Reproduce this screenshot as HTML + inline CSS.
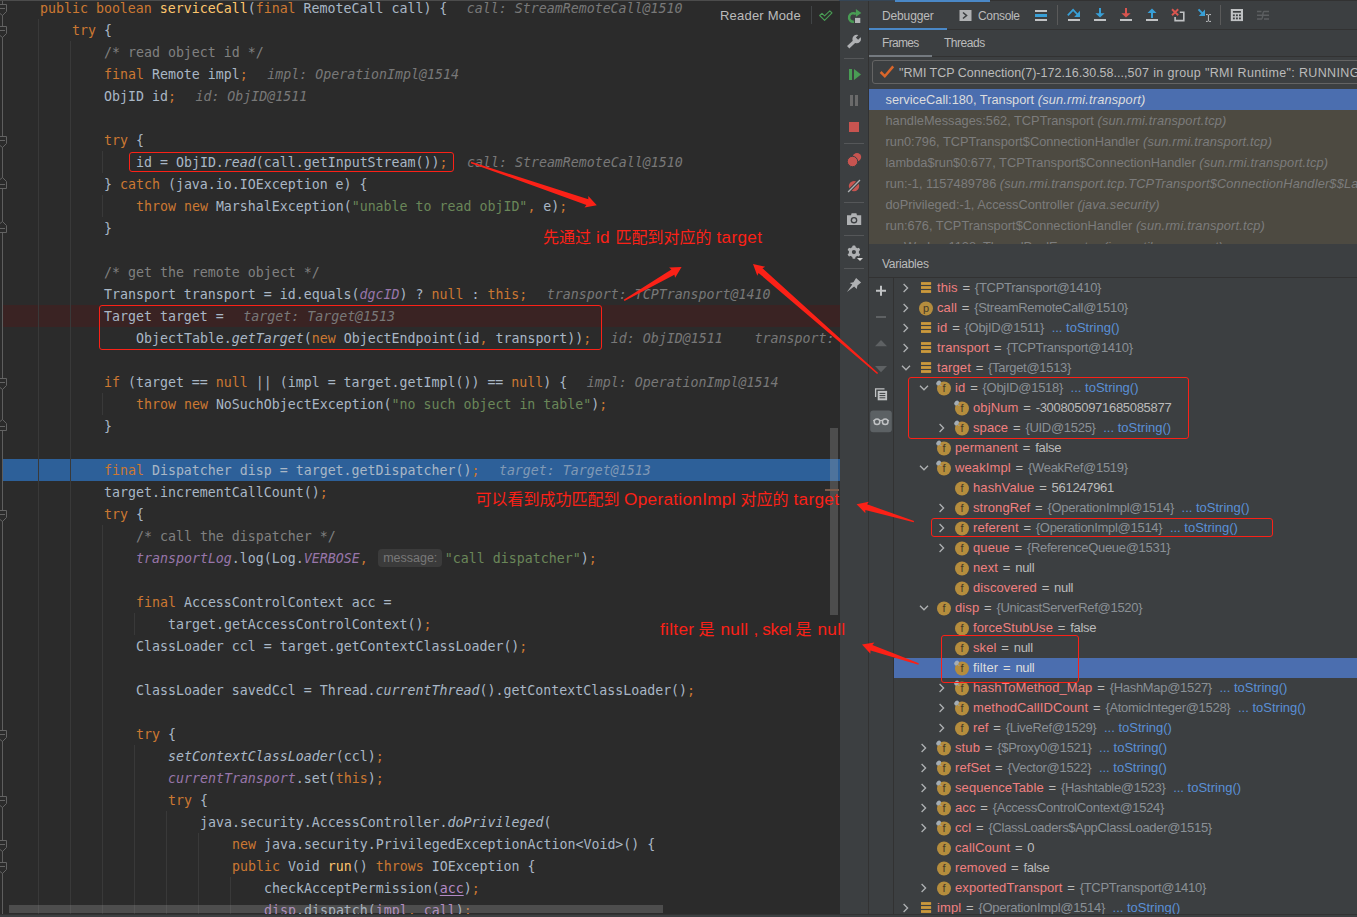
<!DOCTYPE html>
<html lang="zh-CN"><head><meta charset="utf-8"><title>serviceCall debug</title>
<style>
html,body{margin:0;padding:0;background:#2b2b2b;}
body{width:1357px;height:917px;overflow:hidden;}
#root{position:relative;width:1357px;height:917px;overflow:hidden;background:#2b2b2b;font-family:"Liberation Sans","Noto Sans CJK SC",sans-serif;}
#ed{position:absolute;left:0;top:0;width:840px;height:914px;background:#2b2b2b;overflow:hidden;}
#gut{position:absolute;left:2px;top:0;width:1px;height:914px;background:#5e5e5e;}
.g{position:absolute;width:1px;background:#393939;display:block;}
.fd{position:absolute;left:0;overflow:visible;}
#bp{position:absolute;left:3px;top:305px;width:837px;height:22px;background:#3a2323;}
#exl{position:absolute;left:3px;top:459px;width:837px;height:22px;background:#2d6099;}
.ln{position:absolute;white-space:pre;font-family:"DejaVu Sans Mono","Liberation Mono",monospace;font-size:13.288px;line-height:22px;height:22px;color:#a9b7c6;}
.k{color:#cc7832}.s{color:#6a8759}.c{color:#808080}.m{color:#ffc66d}.p{color:#cc7832}
.si{font-style:italic}.sf{font-style:italic;color:#9876aa}
.u{color:#b389c5;text-decoration:underline;text-decoration-color:#b389c5;text-underline-offset:2px}
.h{color:#787878;font-style:italic;margin-left:19.5px}
.ex .h{color:#8099b5}
.inl{display:inline-block;font-family:"Liberation Sans",sans-serif;font-size:12.5px;line-height:18px;height:18px;vertical-align:0px;position:relative;top:-1.5px;background:#3b3b3b;color:#787878;border-radius:4px;padding:0 5px 0 5.5px;margin:0 2.5px 0 10px;}
#rm{position:absolute;left:720px;top:8px;font-size:13px;letter-spacing:.2px;line-height:16px;color:#bbbbbb;}
#rmsep{position:absolute;left:811px;top:6px;width:1px;height:18px;background:#414446;}
#vs{position:absolute;left:830px;top:428px;width:8px;height:187px;background:rgba(166,166,166,.28);}
#vsm{position:absolute;left:825px;top:489px;width:14px;height:2px;background:#7a5a4a;}
#hs{position:absolute;left:9px;top:905px;width:654px;height:8px;background:rgba(166,166,166,.28);}
#tb{position:absolute;left:840px;top:0;width:28px;height:917px;background:#3c3f41;border-right:1px solid #323232;}
#pn{position:absolute;left:869px;top:0;width:488px;height:917px;background:#3c3f41;overflow:hidden;font-size:12px;color:#bbbbbb;}
#tabs{position:absolute;left:0;top:0;width:488px;height:29px;border-bottom:1px solid #323232;}
.tab{position:absolute;top:0;line-height:32px;color:#bbbbbb;font-size:12px;white-space:pre;}
#tabul{position:absolute;left:0;top:28px;width:78px;height:2px;background:#4a88c7;}
#ft{position:absolute;left:0;top:30px;width:488px;height:26px;border-bottom:1px solid #323232;}
#ft .tab{line-height:26px;}
#ftul{position:absolute;left:0;top:25px;width:63px;height:2px;background:#747a80;}
#thr{position:absolute;left:3px;top:60px;width:500px;height:22px;border:1px solid #646464;border-radius:3px;background:#3c3f41;white-space:pre;line-height:21px;color:#bbbbbb;}
#thr span{position:absolute;left:26px;top:0;font-size:12.5px;line-height:25px}#thr span b{font-weight:normal;letter-spacing:.35px}
#frs{position:absolute;left:0;top:89px;width:488px;height:155px;background:#4d4a41;overflow:hidden;}
.fr{position:absolute;left:0;width:472px;height:21px;line-height:21px;padding-left:16.5px;white-space:pre;color:#7c7c7c;font-size:12.8px;}
.fr i{color:#7c7c7c;letter-spacing:.17px}
.fr.sel{background:#4b6eaf;color:#dddddd;}
.fr.sel i{color:#dddddd}
#vh{position:absolute;left:0;top:244px;width:488px;height:33px;line-height:40px;padding-left:13px;border-bottom:1px solid #323232;color:#bbbbbb;}
#vsb{position:absolute;left:0;top:278px;width:24px;height:639px;border-right:1px solid #323232;}
#vars{position:absolute;left:25px;top:278px;width:463px;height:639px;overflow:hidden;}
.vr{position:absolute;left:0;width:463px;height:20px;}
.vr.sel{background:#4b6eaf;}
.a{position:absolute;display:block;line-height:0;}
.vt{position:absolute;top:0;line-height:20px;white-space:pre;font-size:13px;}
.vn{color:#f08080;letter-spacing:.1px}.eq{color:#bbbbbb;word-spacing:1.2px}.vo{color:#8a9096;letter-spacing:-.3px}.vp{color:#bbbbbb;letter-spacing:-.3px}.ts{color:#5a8fd6;margin-left:4px}
.sel .vp,.sel .eq{color:#dddddd}.sel .vn{color:#dddddd}
#topline{position:absolute;left:0;top:0;width:1357px;height:1px;background:linear-gradient(90deg,#4c4c4c 0,#4c4c4c 839px,#364656 839px,#364656 895px,#4a88c7 895px,#4a88c7 990px,#323232 990px);}
#topblue{position:absolute;left:895px;top:0;width:95px;height:2px;background:#4a88c7;}
#botline{position:absolute;left:0;top:914px;width:1357px;height:3px;background:#3c3f41;border-top:1px solid #323232;box-sizing:border-box;}
.rb{position:absolute;border:1px solid #fb2117;border-radius:3px;}
#ann{position:absolute;left:0;top:0;pointer-events:none;}
.rt{position:absolute;color:#fb2117;line-height:24px;white-space:pre;}
.rc{font-family:"Noto Sans CJK SC","WenQuanYi Zen Hei",sans-serif;font-size:16px;}
.rl{font-family:"Liberation Sans",sans-serif;font-size:17.2px;letter-spacing:.3px}
.tbi{position:absolute;display:block;}
.tbs{position:absolute;left:4px;width:20px;height:1px;background:#555759;}

</style></head><body>
<div id="root">
<div id="ed">
<div id="bp"></div><div id="exl"></div>
<i class="g" style="left:38px;top:19px;height:902px"></i>
<i class="g" style="left:70px;top:41px;height:880px"></i>
<i class="g" style="left:102px;top:151px;height:22px"></i>
<i class="g" style="left:102px;top:195px;height:22px"></i>
<i class="g" style="left:102px;top:393px;height:22px"></i>
<i class="g" style="left:102px;top:525px;height:396px"></i>
<i class="g" style="left:134px;top:613px;height:22px"></i>
<i class="g" style="left:134px;top:745px;height:176px"></i>
<i class="g" style="left:166px;top:811px;height:110px"></i>
<i class="g" style="left:198px;top:833px;height:88px"></i>
<i class="g" style="left:230px;top:877px;height:44px"></i>
<div id="gut"></div>
<svg class="fd" style="top:4px" width="8" height="12" viewBox="0 0 8 12"><path d="M-2.5 0.5H6.5V7.5L2.5 11.5L-2.5 7.5Z" fill="#2b2b2b" stroke="#636363"/><path d="M0 4.5H5" stroke="#636363"/></svg>
<svg class="fd" style="top:26px" width="8" height="12" viewBox="0 0 8 12"><path d="M-2.5 0.5H6.5V7.5L2.5 11.5L-2.5 7.5Z" fill="#2b2b2b" stroke="#636363"/><path d="M0 4.5H5" stroke="#636363"/></svg>
<svg class="fd" style="top:136px" width="8" height="12" viewBox="0 0 8 12"><path d="M-2.5 0.5H6.5V7.5L2.5 11.5L-2.5 7.5Z" fill="#2b2b2b" stroke="#636363"/><path d="M0 4.5H5" stroke="#636363"/></svg>
<svg class="fd" style="top:177px" width="8" height="12" viewBox="0 0 8 12"><path d="M-2.5 11.5H6.5V4.5L2.5 0.5L-2.5 4.5Z" fill="#2b2b2b" stroke="#636363"/><path d="M0 7.5H5" stroke="#636363"/></svg>
<svg class="fd" style="top:221px" width="8" height="12" viewBox="0 0 8 12"><path d="M-2.5 11.5H6.5V4.5L2.5 0.5L-2.5 4.5Z" fill="#2b2b2b" stroke="#636363"/><path d="M0 7.5H5" stroke="#636363"/></svg>
<svg class="fd" style="top:378px" width="8" height="12" viewBox="0 0 8 12"><path d="M-2.5 0.5H6.5V7.5L2.5 11.5L-2.5 7.5Z" fill="#2b2b2b" stroke="#636363"/><path d="M0 4.5H5" stroke="#636363"/></svg>
<svg class="fd" style="top:419px" width="8" height="12" viewBox="0 0 8 12"><path d="M-2.5 11.5H6.5V4.5L2.5 0.5L-2.5 4.5Z" fill="#2b2b2b" stroke="#636363"/><path d="M0 7.5H5" stroke="#636363"/></svg>
<svg class="fd" style="top:510px" width="8" height="12" viewBox="0 0 8 12"><path d="M-2.5 0.5H6.5V7.5L2.5 11.5L-2.5 7.5Z" fill="#2b2b2b" stroke="#636363"/><path d="M0 4.5H5" stroke="#636363"/></svg>
<svg class="fd" style="top:730px" width="8" height="12" viewBox="0 0 8 12"><path d="M-2.5 0.5H6.5V7.5L2.5 11.5L-2.5 7.5Z" fill="#2b2b2b" stroke="#636363"/><path d="M0 4.5H5" stroke="#636363"/></svg>
<svg class="fd" style="top:796px" width="8" height="12" viewBox="0 0 8 12"><path d="M-2.5 0.5H6.5V7.5L2.5 11.5L-2.5 7.5Z" fill="#2b2b2b" stroke="#636363"/><path d="M0 4.5H5" stroke="#636363"/></svg>
<svg class="fd" style="top:840px" width="8" height="12" viewBox="0 0 8 12"><path d="M-2.5 0.5H6.5V7.5L2.5 11.5L-2.5 7.5Z" fill="#2b2b2b" stroke="#636363"/><path d="M0 4.5H5" stroke="#636363"/></svg>
<svg class="fd" style="top:862px" width="8" height="12" viewBox="0 0 8 12"><path d="M-2.5 0.5H6.5V7.5L2.5 11.5L-2.5 7.5Z" fill="#2b2b2b" stroke="#636363"/><path d="M0 4.5H5" stroke="#636363"/></svg>
<div class="ln" style="top:-2px;left:40px"><span class="k">public boolean </span><span class="m">serviceCall</span>(<span class="k">final </span>RemoteCall call) {<span class="h">call: StreamRemoteCall@1510</span></div>
<div class="ln" style="top:20px;left:72px"><span class="k">try </span>{</div>
<div class="ln" style="top:42px;left:104px"><span class="c">/* read object id */</span></div>
<div class="ln" style="top:64px;left:104px"><span class="k">final </span>Remote impl<span class="p">;</span><span class="h">impl: OperationImpl@1514</span></div>
<div class="ln" style="top:86px;left:104px">ObjID id<span class="p">;</span><span class="h">id: ObjID@1511</span></div>
<div class="ln" style="top:130px;left:104px"><span class="k">try </span>{</div>
<div class="ln" style="top:152px;left:136px">id = ObjID.<span class="si">read</span>(call.getInputStream())<span class="p">;</span><span class="h">call: StreamRemoteCall@1510</span></div>
<div class="ln" style="top:174px;left:104px">} <span class="k">catch </span>(java.io.IOException e) {</div>
<div class="ln" style="top:196px;left:136px"><span class="k">throw new </span>MarshalException(<span class="s">"unable to read objID"</span><span class="p">,</span> e)<span class="p">;</span></div>
<div class="ln" style="top:218px;left:104px">}</div>
<div class="ln" style="top:262px;left:104px"><span class="c">/* get the remote object */</span></div>
<div class="ln" style="top:284px;left:104px">Transport transport = id.equals(<span class="sf">dgcID</span>) ? <span class="k">null </span>: <span class="k">this</span><span class="p">;</span><span class="h">transport: TCPTransport@1410</span></div>
<div class="ln" style="top:306px;left:104px">Target target =<span class="h">target: Target@1513</span></div>
<div class="ln" style="top:328px;left:136px">ObjectTable.<span class="si">getTarget</span>(<span class="k">new </span>ObjectEndpoint(id<span class="p">,</span> transport))<span class="p">;</span><span class="h">id: ObjID@1511    transport:</span></div>
<div class="ln" style="top:372px;left:104px"><span class="k">if </span>(target == <span class="k">null </span>|| (impl = target.getImpl()) == <span class="k">null</span>) {<span class="h">impl: OperationImpl@1514</span></div>
<div class="ln" style="top:394px;left:136px"><span class="k">throw new </span>NoSuchObjectException(<span class="s">"no such object in table"</span>)<span class="p">;</span></div>
<div class="ln" style="top:416px;left:104px">}</div>
<div class="ln ex" style="top:460px;left:104px"><span class="k">final </span>Dispatcher disp = target.getDispatcher()<span class="p">;</span><span class="h">target: Target@1513</span></div>
<div class="ln" style="top:482px;left:104px">target.incrementCallCount()<span class="p">;</span></div>
<div class="ln" style="top:504px;left:104px"><span class="k">try </span>{</div>
<div class="ln" style="top:526px;left:136px"><span class="c">/* call the dispatcher */</span></div>
<div class="ln" style="top:548px;left:136px"><span class="sf">transportLog</span>.log(Log.<span class="sf">VERBOSE</span><span class="p">,</span><span class="inl">message:</span><span class="s">"call dispatcher"</span>)<span class="p">;</span></div>
<div class="ln" style="top:592px;left:136px"><span class="k">final </span>AccessControlContext acc =</div>
<div class="ln" style="top:614px;left:168px">target.getAccessControlContext()<span class="p">;</span></div>
<div class="ln" style="top:636px;left:136px">ClassLoader ccl = target.getContextClassLoader()<span class="p">;</span></div>
<div class="ln" style="top:680px;left:136px">ClassLoader savedCcl = Thread.<span class="si">currentThread</span>().getContextClassLoader()<span class="p">;</span></div>
<div class="ln" style="top:724px;left:136px"><span class="k">try </span>{</div>
<div class="ln" style="top:746px;left:168px"><span class="si">setContextClassLoader</span>(ccl)<span class="p">;</span></div>
<div class="ln" style="top:768px;left:168px"><span class="sf">currentTransport</span>.set(<span class="k">this</span>)<span class="p">;</span></div>
<div class="ln" style="top:790px;left:168px"><span class="k">try </span>{</div>
<div class="ln" style="top:812px;left:200px">java.security.AccessController.<span class="si">doPrivileged</span>(</div>
<div class="ln" style="top:834px;left:232px"><span class="k">new </span>java.security.PrivilegedExceptionAction&lt;Void&gt;() {</div>
<div class="ln" style="top:856px;left:232px"><span class="k">public </span>Void <span class="m">run</span>() <span class="k">throws </span>IOException {</div>
<div class="ln" style="top:878px;left:264px">checkAcceptPermission(<span class="u">acc</span>)<span class="p">;</span></div>
<div class="ln" style="top:900px;left:264px"><span class="u">disp</span>.dispatch(<span class="u">impl</span><span class="p">,</span> <span class="u">call</span>)<span class="p">;</span></div>
<div id="rm">Reader Mode</div><div id="rmsep"></div><svg class="tbi" style="left:816px;top:6px" width="20" height="20" viewBox="816 6 20 20"><path d="M819.7 15.5L822 13.3L824.6 15.9L829.8 10.9L832 12.9L824.6 20.4Z" fill="none" stroke="#499c54" stroke-width="1.1" stroke-linejoin="round"/></svg>
<div id="vs"></div><div id="vsm"></div><div id="hs"></div>
</div>
<div id="tb"><svg class="tbi" style="left:0;top:0" width="28" height="300" viewBox="0 0 28 300"><rect x="4" y="58" width="20" height="1" fill="#555759"/><rect x="4" y="143" width="20" height="1" fill="#555759"/><rect x="4" y="202" width="20" height="1" fill="#555759"/><rect x="4" y="235" width="20" height="1" fill="#555759"/><rect x="4" y="268" width="20" height="1" fill="#555759"/><path d="M15.9 14A4.3 4.3 0 1 0 13.9 21.75" fill="none" stroke="#499c54" stroke-width="2.5"/><path d="M15.9 9V16.8L21.3 12.9Z" fill="#499c54"/><rect x="15" y="17.9" width="5.3" height="5.1" fill="#b4b6b8"/><path d="M8.2 47.2L15.3 40.6" stroke="#afb1b3" stroke-width="3.3"/><circle cx="16.7" cy="39" r="4.3" fill="#afb1b3"/><path d="M17 38.7L22 33.7" stroke="#3c3f41" stroke-width="3.2"/><rect x="9" y="69" width="3" height="11" fill="#499c54"/><path d="M14 69V80L21 74.5Z" fill="#499c54"/><rect x="10" y="95" width="3" height="11" fill="#6a6a6a"/><rect x="15" y="95" width="3" height="11" fill="#6a6a6a"/><rect x="9" y="122" width="10" height="10" fill="#c75450"/><circle cx="17" cy="157.1" r="4.2" fill="#c75450"/><circle cx="12.5" cy="161.5" r="5.2" fill="#c75450" stroke="#3c3f41" stroke-width="1"/><circle cx="14" cy="186.1" r="5.2" fill="#c75450"/><path d="M8.1 192L20 180" stroke="#3c3f41" stroke-width="3.3"/><path d="M8.1 192L20 180" stroke="#afb1b3" stroke-width="1.3"/><path d="M7 215.3H11L11.6 213.2H16.4L17 215.3H21.2V225H7Z" fill="#afb1b3"/><circle cx="14" cy="220.2" r="3.3" fill="#3c3f41"/><circle cx="14" cy="220.2" r="1.9" fill="#afb1b3"/><rect x="12.4" y="245.5" width="3" height="4" rx="0.8" transform="rotate(0 13.9 252.1)" fill="#afb1b3"/><rect x="12.4" y="245.5" width="3" height="4" rx="0.8" transform="rotate(60 13.9 252.1)" fill="#afb1b3"/><rect x="12.4" y="245.5" width="3" height="4" rx="0.8" transform="rotate(120 13.9 252.1)" fill="#afb1b3"/><rect x="12.4" y="245.5" width="3" height="4" rx="0.8" transform="rotate(180 13.9 252.1)" fill="#afb1b3"/><rect x="12.4" y="245.5" width="3" height="4" rx="0.8" transform="rotate(240 13.9 252.1)" fill="#afb1b3"/><rect x="12.4" y="245.5" width="3" height="4" rx="0.8" transform="rotate(300 13.9 252.1)" fill="#afb1b3"/><circle cx="13.9" cy="252.1" r="3.6" fill="none" stroke="#afb1b3" stroke-width="3"/><path d="M16.9 258H23L20 261Z" fill="#d2d2d2"/><path d="M16.1 278L21.1 282.5L17.4 285.4L16.8 289.1L14.1 286.4L6.9 292L12.3 284.6L9.7 282.9L13.4 282.2Z" fill="#afb1b3"/></svg></div>
<div id="pn">
<div id="tabs"><span class="tab" style="left:13px;letter-spacing:-.14px">Debugger</span><svg class="tbi" style="left:90px;top:9px" width="13" height="13" viewBox="0 0 13 13"><rect x="0.5" y="1" width="12" height="11" fill="#afb1b3"/><path d="M4 3.5L7.5 6.5L4 9.5" fill="none" stroke="#3c3f41" stroke-width="1.6"/></svg><span class="tab" style="left:109px;letter-spacing:-.33px">Console</span><svg class="tbi" style="left:0;top:0" width="488" height="30" viewBox="869 0 488 30"><rect x="1035" y="10" width="12" height="2" fill="#c0c2c4"/><rect x="1035" y="14" width="12" height="3" fill="#389fd6"/><rect x="1035" y="19" width="12" height="2" fill="#c0c2c4"/><rect x="1057" y="5" width="1" height="20" fill="#5a5a5a"/><path d="M1067.8 15.4L1073.1 9.8L1078 15" fill="none" stroke="#389fd6" stroke-width="1.7"/><path d="M1080 10.8V16.9H1074.2Z" fill="#389fd6"/><rect x="1068" y="19" width="12" height="2" fill="#c0c2c4"/><rect x="1099" y="8" width="2" height="6" fill="#389fd6"/><path d="M1095.4 13.2H1104.6L1100 17.6Z" fill="#389fd6"/><rect x="1094" y="19" width="12" height="2" fill="#c0c2c4"/><rect x="1125" y="8" width="2" height="6" fill="#d9554f"/><path d="M1121.4 13.2H1130.6L1126 17.6Z" fill="#d9554f"/><rect x="1120" y="19" width="12" height="2" fill="#c0c2c4"/><rect x="1151" y="12" width="2" height="6" fill="#389fd6"/><path d="M1147.5 12.9H1156.5L1152 8.5Z" fill="#389fd6"/><rect x="1146" y="19" width="12" height="2" fill="#c0c2c4"/><path d="M1172 9.2L1178.2 15.2M1178.2 9.2L1172 15.2" stroke="#d9554f" stroke-width="1.9"/><path d="M1179.8 12.3H1183.8V20.6H1175.1V17" fill="none" stroke="#c0c2c4" stroke-width="1.6"/><path d="M1198.5 9.4L1203 14" stroke="#389fd6" stroke-width="1.9"/><path d="M1205 9.6V15.9H1198.8Z" fill="#389fd6"/><path d="M1206 14.6H1207.6L1208.4 15.2L1209.2 14.6H1211M1208.4 15V20.8M1206 21.4H1207.6L1208.4 20.8L1209.2 21.4H1211" fill="none" stroke="#c0c2c4" stroke-width="1"/><rect x="1220" y="5" width="1" height="20" fill="#5a5a5a"/><rect x="1230.8" y="9" width="12.2" height="12.1" fill="#c0c2c4"/><rect x="1232.9" y="11" width="8" height="1.7" fill="#3c3f41"/><rect x="1232.9" y="14.4" width="1.9" height="1.8" fill="#3c3f41"/><rect x="1235.95" y="14.4" width="1.9" height="1.8" fill="#3c3f41"/><rect x="1239" y="14.4" width="1.9" height="1.8" fill="#3c3f41"/><rect x="1232.9" y="17.5" width="1.9" height="1.8" fill="#3c3f41"/><rect x="1235.95" y="17.5" width="1.9" height="1.8" fill="#3c3f41"/><rect x="1239" y="17.5" width="1.9" height="1.8" fill="#3c3f41"/><path d="M1257 11.5H1261.5M1264 11.5H1269M1257 15.2H1269M1257 19H1261.5M1264 19H1269M1261.5 19C1263 19 1262.5 11.5 1264 11.5" fill="none" stroke="#5c5f61" stroke-width="1.5"/></svg><div id="tabul"></div></div>
<div id="ft"><span class="tab" style="left:13px;letter-spacing:-.7px">Frames</span><span class="tab" style="left:75px;letter-spacing:-.47px">Threads</span><div id="ftul"></div></div>
<div id="thr"><svg class="tbi" style="left:6px;top:3px" width="16" height="16" viewBox="0 0 16 16"><path d="M1.6 8L5.8 12.2L14.2 2.4" fill="none" stroke="#d9662b" stroke-width="2.5"/></svg><span>"RMI TCP Connection(7)-172.16.30.58...,<b>507 in group "RMI Runtime": RUNNING</b></span></div>
<div id="frs"><div class="fr sel" style="top:0px">serviceCall:180, Transport <i>(sun.rmi.transport)</i></div>
<div class="fr" style="top:21px">handleMessages:562, TCPTransport <i>(sun.rmi.transport.tcp)</i></div>
<div class="fr" style="top:42px">run0:796, TCPTransport$ConnectionHandler <i>(sun.rmi.transport.tcp)</i></div>
<div class="fr" style="top:63px">lambda$run$0:677, TCPTransport$ConnectionHandler <i>(sun.rmi.transport.tcp)</i></div>
<div class="fr" style="top:84px">run:-1, 1157489786 <i>(sun.rmi.transport.tcp.TCPTransport$ConnectionHandler$$Lambda$5)</i></div>
<div class="fr" style="top:105px">doPrivileged:-1, AccessController <i>(java.security)</i></div>
<div class="fr" style="top:126px">run:676, TCPTransport$ConnectionHandler <i>(sun.rmi.transport.tcp)</i></div>
<div class="fr" style="top:147px">runWorker:1128, ThreadPoolExecutor <i>(java.util.concurrent)</i></div></div>
<div id="vh"><span style="letter-spacing:-.28px">Variables</span></div>
<div id="vsb"><svg class="tbi" style="left:0;top:0" width="24" height="160" viewBox="869 278 24 160"><path d="M881 285.8V295.8M876 290.8H886" stroke="#c0c2c4" stroke-width="2"/><path d="M876 317H886" stroke="#5e6163" stroke-width="2"/><path d="M875 346.3L881 340L887 346.3Z" fill="#5e6163"/><path d="M875 366L881 372.3L887 366Z" fill="#5e6163"/><path d="M875.6 397V388.9H884.5" fill="none" stroke="#c0c2c4" stroke-width="1.3"/><rect x="877.7" y="390.9" width="9.4" height="9.4" fill="#c0c2c4"/><path d="M879.5 393.4H885.3M879.5 395.6H885.3M879.5 397.8H885.3" stroke="#3c3f41" stroke-width="1"/><rect x="870.2" y="410.5" width="21.6" height="21.7" rx="3" fill="#5c6164"/><circle cx="877" cy="421.8" r="2.8" fill="none" stroke="#c0c2c4" stroke-width="1.5"/><circle cx="885.2" cy="421.8" r="2.8" fill="none" stroke="#c0c2c4" stroke-width="1.5"/><path d="M879.6 420.8Q881.1 419.8 882.6 420.8M874.3 420.8L873.2 420.2M887.9 420.8L889 420.2" fill="none" stroke="#c0c2c4" stroke-width="1.2"/></svg></div>
<div id="vars"><div class="vr" style="top:0px"><span class="a" style="left:7px;top:3.5px"><svg class="ar" width="10" height="12" viewBox="0 0 10 12"><path d="M2.6 2L6.6 6L2.6 10" fill="none" stroke="#afb1b3" stroke-width="1.3"/></svg></span><span class="a" style="left:26px;top:4px"><svg class="ic" width="12" height="13" viewBox="0 0 12 13"><path d="M1 1.5H11.1M1 5.5H11.1M1 9.5H11.1" stroke="#bf8f38" stroke-width="3.1"/><path d="M1 1.5H11.1M1 5.5H11.1M1 9.5H11.1" stroke="#c89a42" stroke-width="0.9"/></svg></span><span class="vt" style="left:43px"><span class="vn">this</span><span class="eq"> = </span><span class="vo">{TCPTransport@1410}</span></span></div>
<div class="vr" style="top:20px"><span class="a" style="left:7px;top:3.5px"><svg class="ar" width="10" height="12" viewBox="0 0 10 12"><path d="M2.6 2L6.6 6L2.6 10" fill="none" stroke="#afb1b3" stroke-width="1.3"/></svg></span><span class="a" style="left:24px;top:2px"><svg class="ic c" width="16" height="16" viewBox="0 0 16 16" overflow="visible"><circle cx="8" cy="8.5" r="7" fill="#b58d3d"/><text x="8" y="12.3" text-anchor="middle" font-family="Liberation Sans, sans-serif" font-size="11" fill="#44392a">p</text></svg></span><span class="vt" style="left:43px"><span class="vn">call</span><span class="eq"> = </span><span class="vo">{StreamRemoteCall@1510}</span></span></div>
<div class="vr" style="top:40px"><span class="a" style="left:7px;top:3.5px"><svg class="ar" width="10" height="12" viewBox="0 0 10 12"><path d="M2.6 2L6.6 6L2.6 10" fill="none" stroke="#afb1b3" stroke-width="1.3"/></svg></span><span class="a" style="left:26px;top:4px"><svg class="ic" width="12" height="13" viewBox="0 0 12 13"><path d="M1 1.5H11.1M1 5.5H11.1M1 9.5H11.1" stroke="#bf8f38" stroke-width="3.1"/><path d="M1 1.5H11.1M1 5.5H11.1M1 9.5H11.1" stroke="#c89a42" stroke-width="0.9"/></svg></span><span class="vt" style="left:43px"><span class="vn">id</span><span class="eq"> = </span><span class="vo">{ObjID@1511}</span><span class="ts"> ... toString()</span></span></div>
<div class="vr" style="top:60px"><span class="a" style="left:7px;top:3.5px"><svg class="ar" width="10" height="12" viewBox="0 0 10 12"><path d="M2.6 2L6.6 6L2.6 10" fill="none" stroke="#afb1b3" stroke-width="1.3"/></svg></span><span class="a" style="left:26px;top:4px"><svg class="ic" width="12" height="13" viewBox="0 0 12 13"><path d="M1 1.5H11.1M1 5.5H11.1M1 9.5H11.1" stroke="#bf8f38" stroke-width="3.1"/><path d="M1 1.5H11.1M1 5.5H11.1M1 9.5H11.1" stroke="#c89a42" stroke-width="0.9"/></svg></span><span class="vt" style="left:43px"><span class="vn">transport</span><span class="eq"> = </span><span class="vo">{TCPTransport@1410}</span></span></div>
<div class="vr" style="top:80px"><span class="a" style="left:6px;top:4.5px"><svg class="ar" width="12" height="10" viewBox="0 0 12 10"><path d="M2 2.8L6 6.8L10 2.8" fill="none" stroke="#afb1b3" stroke-width="1.3"/></svg></span><span class="a" style="left:26px;top:4px"><svg class="ic" width="12" height="13" viewBox="0 0 12 13"><path d="M1 1.5H11.1M1 5.5H11.1M1 9.5H11.1" stroke="#bf8f38" stroke-width="3.1"/><path d="M1 1.5H11.1M1 5.5H11.1M1 9.5H11.1" stroke="#c89a42" stroke-width="0.9"/></svg></span><span class="vt" style="left:43px"><span class="vn">target</span><span class="eq"> = </span><span class="vo">{Target@1513}</span></span></div>
<div class="vr" style="top:100px"><span class="a" style="left:24px;top:4.5px"><svg class="ar" width="12" height="10" viewBox="0 0 12 10"><path d="M2 2.8L6 6.8L10 2.8" fill="none" stroke="#afb1b3" stroke-width="1.3"/></svg></span><span class="a" style="left:42px;top:2px"><svg class="ic c" width="16" height="16" viewBox="0 0 16 16" overflow="visible"><circle cx="8" cy="8.5" r="7" fill="#b58d3d"/><text x="8" y="12.3" text-anchor="middle" font-family="Liberation Sans, sans-serif" font-size="11" fill="#44392a">f</text><ellipse cx="2.6" cy="3" rx="2.7" ry="2" transform="rotate(-45 2.6 3)" fill="#a4adb5"/><path d="M3.6 4.2L5.4 6" stroke="#9aa7b0" stroke-width="1"/></svg></span><span class="vt" style="left:61px"><span class="vn">id</span><span class="eq"> = </span><span class="vo">{ObjID@1518}</span><span class="ts"> ... toString()</span></span></div>
<div class="vr" style="top:120px"><span class="a" style="left:60px;top:2px"><svg class="ic c" width="16" height="16" viewBox="0 0 16 16" overflow="visible"><circle cx="8" cy="8.5" r="7" fill="#b58d3d"/><text x="8" y="12.3" text-anchor="middle" font-family="Liberation Sans, sans-serif" font-size="11" fill="#44392a">f</text><ellipse cx="2.6" cy="3" rx="2.7" ry="2" transform="rotate(-45 2.6 3)" fill="#a4adb5"/><path d="M3.6 4.2L5.4 6" stroke="#9aa7b0" stroke-width="1"/></svg></span><span class="vt" style="left:79px"><span class="vn">objNum</span><span class="eq"> = </span><span class="vp">-3008050971685085877</span></span></div>
<div class="vr" style="top:140px"><span class="a" style="left:43px;top:3.5px"><svg class="ar" width="10" height="12" viewBox="0 0 10 12"><path d="M2.6 2L6.6 6L2.6 10" fill="none" stroke="#afb1b3" stroke-width="1.3"/></svg></span><span class="a" style="left:60px;top:2px"><svg class="ic c" width="16" height="16" viewBox="0 0 16 16" overflow="visible"><circle cx="8" cy="8.5" r="7" fill="#b58d3d"/><text x="8" y="12.3" text-anchor="middle" font-family="Liberation Sans, sans-serif" font-size="11" fill="#44392a">f</text><ellipse cx="2.6" cy="3" rx="2.7" ry="2" transform="rotate(-45 2.6 3)" fill="#a4adb5"/><path d="M3.6 4.2L5.4 6" stroke="#9aa7b0" stroke-width="1"/></svg></span><span class="vt" style="left:79px"><span class="vn">space</span><span class="eq"> = </span><span class="vo">{UID@1525}</span><span class="ts"> ... toString()</span></span></div>
<div class="vr" style="top:160px"><span class="a" style="left:42px;top:2px"><svg class="ic c" width="16" height="16" viewBox="0 0 16 16" overflow="visible"><circle cx="8" cy="8.5" r="7" fill="#b58d3d"/><text x="8" y="12.3" text-anchor="middle" font-family="Liberation Sans, sans-serif" font-size="11" fill="#44392a">f</text><ellipse cx="2.6" cy="3" rx="2.7" ry="2" transform="rotate(-45 2.6 3)" fill="#a4adb5"/><path d="M3.6 4.2L5.4 6" stroke="#9aa7b0" stroke-width="1"/></svg></span><span class="vt" style="left:61px"><span class="vn">permanent</span><span class="eq"> = </span><span class="vp">false</span></span></div>
<div class="vr" style="top:180px"><span class="a" style="left:24px;top:4.5px"><svg class="ar" width="12" height="10" viewBox="0 0 12 10"><path d="M2 2.8L6 6.8L10 2.8" fill="none" stroke="#afb1b3" stroke-width="1.3"/></svg></span><span class="a" style="left:42px;top:2px"><svg class="ic c" width="16" height="16" viewBox="0 0 16 16" overflow="visible"><circle cx="8" cy="8.5" r="7" fill="#b58d3d"/><text x="8" y="12.3" text-anchor="middle" font-family="Liberation Sans, sans-serif" font-size="11" fill="#44392a">f</text><ellipse cx="2.6" cy="3" rx="2.7" ry="2" transform="rotate(-45 2.6 3)" fill="#a4adb5"/><path d="M3.6 4.2L5.4 6" stroke="#9aa7b0" stroke-width="1"/></svg></span><span class="vt" style="left:61px"><span class="vn">weakImpl</span><span class="eq"> = </span><span class="vo">{WeakRef@1519}</span></span></div>
<div class="vr" style="top:200px"><span class="a" style="left:60px;top:2px"><svg class="ic c" width="16" height="16" viewBox="0 0 16 16" overflow="visible"><circle cx="8" cy="8.5" r="7" fill="#b58d3d"/><text x="8" y="12.3" text-anchor="middle" font-family="Liberation Sans, sans-serif" font-size="11" fill="#44392a">f</text></svg></span><span class="vt" style="left:79px"><span class="vn">hashValue</span><span class="eq"> = </span><span class="vp">561247961</span></span></div>
<div class="vr" style="top:220px"><span class="a" style="left:43px;top:3.5px"><svg class="ar" width="10" height="12" viewBox="0 0 10 12"><path d="M2.6 2L6.6 6L2.6 10" fill="none" stroke="#afb1b3" stroke-width="1.3"/></svg></span><span class="a" style="left:60px;top:2px"><svg class="ic c" width="16" height="16" viewBox="0 0 16 16" overflow="visible"><circle cx="8" cy="8.5" r="7" fill="#b58d3d"/><text x="8" y="12.3" text-anchor="middle" font-family="Liberation Sans, sans-serif" font-size="11" fill="#44392a">f</text></svg></span><span class="vt" style="left:79px"><span class="vn">strongRef</span><span class="eq"> = </span><span class="vo">{OperationImpl@1514}</span><span class="ts"> ... toString()</span></span></div>
<div class="vr" style="top:240px"><span class="a" style="left:43px;top:3.5px"><svg class="ar" width="10" height="12" viewBox="0 0 10 12"><path d="M2.6 2L6.6 6L2.6 10" fill="none" stroke="#afb1b3" stroke-width="1.3"/></svg></span><span class="a" style="left:60px;top:2px"><svg class="ic c" width="16" height="16" viewBox="0 0 16 16" overflow="visible"><circle cx="8" cy="8.5" r="7" fill="#b58d3d"/><text x="8" y="12.3" text-anchor="middle" font-family="Liberation Sans, sans-serif" font-size="11" fill="#44392a">f</text></svg></span><span class="vt" style="left:79px"><span class="vn">referent</span><span class="eq"> = </span><span class="vo">{OperationImpl@1514}</span><span class="ts"> ... toString()</span></span></div>
<div class="vr" style="top:260px"><span class="a" style="left:43px;top:3.5px"><svg class="ar" width="10" height="12" viewBox="0 0 10 12"><path d="M2.6 2L6.6 6L2.6 10" fill="none" stroke="#afb1b3" stroke-width="1.3"/></svg></span><span class="a" style="left:60px;top:2px"><svg class="ic c" width="16" height="16" viewBox="0 0 16 16" overflow="visible"><circle cx="8" cy="8.5" r="7" fill="#b58d3d"/><text x="8" y="12.3" text-anchor="middle" font-family="Liberation Sans, sans-serif" font-size="11" fill="#44392a">f</text></svg></span><span class="vt" style="left:79px"><span class="vn">queue</span><span class="eq"> = </span><span class="vo">{ReferenceQueue@1531}</span></span></div>
<div class="vr" style="top:280px"><span class="a" style="left:60px;top:2px"><svg class="ic c" width="16" height="16" viewBox="0 0 16 16" overflow="visible"><circle cx="8" cy="8.5" r="7" fill="#b58d3d"/><text x="8" y="12.3" text-anchor="middle" font-family="Liberation Sans, sans-serif" font-size="11" fill="#44392a">f</text></svg></span><span class="vt" style="left:79px"><span class="vn">next</span><span class="eq"> = </span><span class="vp">null</span></span></div>
<div class="vr" style="top:300px"><span class="a" style="left:60px;top:2px"><svg class="ic c" width="16" height="16" viewBox="0 0 16 16" overflow="visible"><circle cx="8" cy="8.5" r="7" fill="#b58d3d"/><text x="8" y="12.3" text-anchor="middle" font-family="Liberation Sans, sans-serif" font-size="11" fill="#44392a">f</text></svg></span><span class="vt" style="left:79px"><span class="vn">discovered</span><span class="eq"> = </span><span class="vp">null</span></span></div>
<div class="vr" style="top:320px"><span class="a" style="left:24px;top:4.5px"><svg class="ar" width="12" height="10" viewBox="0 0 12 10"><path d="M2 2.8L6 6.8L10 2.8" fill="none" stroke="#afb1b3" stroke-width="1.3"/></svg></span><span class="a" style="left:42px;top:2px"><svg class="ic c" width="16" height="16" viewBox="0 0 16 16" overflow="visible"><circle cx="8" cy="8.5" r="7" fill="#b58d3d"/><text x="8" y="12.3" text-anchor="middle" font-family="Liberation Sans, sans-serif" font-size="11" fill="#44392a">f</text></svg></span><span class="vt" style="left:61px"><span class="vn">disp</span><span class="eq"> = </span><span class="vo">{UnicastServerRef@1520}</span></span></div>
<div class="vr" style="top:340px"><span class="a" style="left:60px;top:2px"><svg class="ic c" width="16" height="16" viewBox="0 0 16 16" overflow="visible"><circle cx="8" cy="8.5" r="7" fill="#b58d3d"/><text x="8" y="12.3" text-anchor="middle" font-family="Liberation Sans, sans-serif" font-size="11" fill="#44392a">f</text></svg></span><span class="vt" style="left:79px"><span class="vn">forceStubUse</span><span class="eq"> = </span><span class="vp">false</span></span></div>
<div class="vr" style="top:360px"><span class="a" style="left:60px;top:2px"><svg class="ic c" width="16" height="16" viewBox="0 0 16 16" overflow="visible"><circle cx="8" cy="8.5" r="7" fill="#b58d3d"/><text x="8" y="12.3" text-anchor="middle" font-family="Liberation Sans, sans-serif" font-size="11" fill="#44392a">f</text></svg></span><span class="vt" style="left:79px"><span class="vn">skel</span><span class="eq"> = </span><span class="vp">null</span></span></div>
<div class="vr sel" style="top:380px"><span class="a" style="left:60px;top:2px"><svg class="ic c" width="16" height="16" viewBox="0 0 16 16" overflow="visible"><circle cx="8" cy="8.5" r="7" fill="#b58d3d"/><text x="8" y="12.3" text-anchor="middle" font-family="Liberation Sans, sans-serif" font-size="11" fill="#44392a">f</text><ellipse cx="2.6" cy="3" rx="2.7" ry="2" transform="rotate(-45 2.6 3)" fill="#a4adb5"/><path d="M3.6 4.2L5.4 6" stroke="#9aa7b0" stroke-width="1"/></svg></span><span class="vt" style="left:79px"><span class="vn">filter</span><span class="eq"> = </span><span class="vp">null</span></span></div>
<div class="vr" style="top:400px"><span class="a" style="left:43px;top:3.5px"><svg class="ar" width="10" height="12" viewBox="0 0 10 12"><path d="M2.6 2L6.6 6L2.6 10" fill="none" stroke="#afb1b3" stroke-width="1.3"/></svg></span><span class="a" style="left:60px;top:2px"><svg class="ic c" width="16" height="16" viewBox="0 0 16 16" overflow="visible"><circle cx="8" cy="8.5" r="7" fill="#b58d3d"/><text x="8" y="12.3" text-anchor="middle" font-family="Liberation Sans, sans-serif" font-size="11" fill="#44392a">f</text><ellipse cx="2.6" cy="3" rx="2.7" ry="2" transform="rotate(-45 2.6 3)" fill="#a4adb5"/><path d="M3.6 4.2L5.4 6" stroke="#9aa7b0" stroke-width="1"/></svg></span><span class="vt" style="left:79px"><span class="vn">hashToMethod_Map</span><span class="eq"> = </span><span class="vo">{HashMap@1527}</span><span class="ts"> ... toString()</span></span></div>
<div class="vr" style="top:420px"><span class="a" style="left:43px;top:3.5px"><svg class="ar" width="10" height="12" viewBox="0 0 10 12"><path d="M2.6 2L6.6 6L2.6 10" fill="none" stroke="#afb1b3" stroke-width="1.3"/></svg></span><span class="a" style="left:60px;top:2px"><svg class="ic c" width="16" height="16" viewBox="0 0 16 16" overflow="visible"><circle cx="8" cy="8.5" r="7" fill="#b58d3d"/><text x="8" y="12.3" text-anchor="middle" font-family="Liberation Sans, sans-serif" font-size="11" fill="#44392a">f</text><ellipse cx="2.6" cy="3" rx="2.7" ry="2" transform="rotate(-45 2.6 3)" fill="#a4adb5"/><path d="M3.6 4.2L5.4 6" stroke="#9aa7b0" stroke-width="1"/></svg></span><span class="vt" style="left:79px"><span class="vn">methodCallIDCount</span><span class="eq"> = </span><span class="vo">{AtomicInteger@1528}</span><span class="ts"> ... toString()</span></span></div>
<div class="vr" style="top:440px"><span class="a" style="left:43px;top:3.5px"><svg class="ar" width="10" height="12" viewBox="0 0 10 12"><path d="M2.6 2L6.6 6L2.6 10" fill="none" stroke="#afb1b3" stroke-width="1.3"/></svg></span><span class="a" style="left:60px;top:2px"><svg class="ic c" width="16" height="16" viewBox="0 0 16 16" overflow="visible"><circle cx="8" cy="8.5" r="7" fill="#b58d3d"/><text x="8" y="12.3" text-anchor="middle" font-family="Liberation Sans, sans-serif" font-size="11" fill="#44392a">f</text></svg></span><span class="vt" style="left:79px"><span class="vn">ref</span><span class="eq"> = </span><span class="vo">{LiveRef@1529}</span><span class="ts"> ... toString()</span></span></div>
<div class="vr" style="top:460px"><span class="a" style="left:25px;top:3.5px"><svg class="ar" width="10" height="12" viewBox="0 0 10 12"><path d="M2.6 2L6.6 6L2.6 10" fill="none" stroke="#afb1b3" stroke-width="1.3"/></svg></span><span class="a" style="left:42px;top:2px"><svg class="ic c" width="16" height="16" viewBox="0 0 16 16" overflow="visible"><circle cx="8" cy="8.5" r="7" fill="#b58d3d"/><text x="8" y="12.3" text-anchor="middle" font-family="Liberation Sans, sans-serif" font-size="11" fill="#44392a">f</text><ellipse cx="2.6" cy="3" rx="2.7" ry="2" transform="rotate(-45 2.6 3)" fill="#a4adb5"/><path d="M3.6 4.2L5.4 6" stroke="#9aa7b0" stroke-width="1"/></svg></span><span class="vt" style="left:61px"><span class="vn">stub</span><span class="eq"> = </span><span class="vo">{$Proxy0@1521}</span><span class="ts"> ... toString()</span></span></div>
<div class="vr" style="top:480px"><span class="a" style="left:25px;top:3.5px"><svg class="ar" width="10" height="12" viewBox="0 0 10 12"><path d="M2.6 2L6.6 6L2.6 10" fill="none" stroke="#afb1b3" stroke-width="1.3"/></svg></span><span class="a" style="left:42px;top:2px"><svg class="ic c" width="16" height="16" viewBox="0 0 16 16" overflow="visible"><circle cx="8" cy="8.5" r="7" fill="#b58d3d"/><text x="8" y="12.3" text-anchor="middle" font-family="Liberation Sans, sans-serif" font-size="11" fill="#44392a">f</text><ellipse cx="2.6" cy="3" rx="2.7" ry="2" transform="rotate(-45 2.6 3)" fill="#a4adb5"/><path d="M3.6 4.2L5.4 6" stroke="#9aa7b0" stroke-width="1"/></svg></span><span class="vt" style="left:61px"><span class="vn">refSet</span><span class="eq"> = </span><span class="vo">{Vector@1522}</span><span class="ts"> ... toString()</span></span></div>
<div class="vr" style="top:500px"><span class="a" style="left:25px;top:3.5px"><svg class="ar" width="10" height="12" viewBox="0 0 10 12"><path d="M2.6 2L6.6 6L2.6 10" fill="none" stroke="#afb1b3" stroke-width="1.3"/></svg></span><span class="a" style="left:42px;top:2px"><svg class="ic c" width="16" height="16" viewBox="0 0 16 16" overflow="visible"><circle cx="8" cy="8.5" r="7" fill="#b58d3d"/><text x="8" y="12.3" text-anchor="middle" font-family="Liberation Sans, sans-serif" font-size="11" fill="#44392a">f</text><ellipse cx="2.6" cy="3" rx="2.7" ry="2" transform="rotate(-45 2.6 3)" fill="#a4adb5"/><path d="M3.6 4.2L5.4 6" stroke="#9aa7b0" stroke-width="1"/></svg></span><span class="vt" style="left:61px"><span class="vn">sequenceTable</span><span class="eq"> = </span><span class="vo">{Hashtable@1523}</span><span class="ts"> ... toString()</span></span></div>
<div class="vr" style="top:520px"><span class="a" style="left:25px;top:3.5px"><svg class="ar" width="10" height="12" viewBox="0 0 10 12"><path d="M2.6 2L6.6 6L2.6 10" fill="none" stroke="#afb1b3" stroke-width="1.3"/></svg></span><span class="a" style="left:42px;top:2px"><svg class="ic c" width="16" height="16" viewBox="0 0 16 16" overflow="visible"><circle cx="8" cy="8.5" r="7" fill="#b58d3d"/><text x="8" y="12.3" text-anchor="middle" font-family="Liberation Sans, sans-serif" font-size="11" fill="#44392a">f</text><ellipse cx="2.6" cy="3" rx="2.7" ry="2" transform="rotate(-45 2.6 3)" fill="#a4adb5"/><path d="M3.6 4.2L5.4 6" stroke="#9aa7b0" stroke-width="1"/></svg></span><span class="vt" style="left:61px"><span class="vn">acc</span><span class="eq"> = </span><span class="vo">{AccessControlContext@1524}</span></span></div>
<div class="vr" style="top:540px"><span class="a" style="left:25px;top:3.5px"><svg class="ar" width="10" height="12" viewBox="0 0 10 12"><path d="M2.6 2L6.6 6L2.6 10" fill="none" stroke="#afb1b3" stroke-width="1.3"/></svg></span><span class="a" style="left:42px;top:2px"><svg class="ic c" width="16" height="16" viewBox="0 0 16 16" overflow="visible"><circle cx="8" cy="8.5" r="7" fill="#b58d3d"/><text x="8" y="12.3" text-anchor="middle" font-family="Liberation Sans, sans-serif" font-size="11" fill="#44392a">f</text><ellipse cx="2.6" cy="3" rx="2.7" ry="2" transform="rotate(-45 2.6 3)" fill="#a4adb5"/><path d="M3.6 4.2L5.4 6" stroke="#9aa7b0" stroke-width="1"/></svg></span><span class="vt" style="left:61px"><span class="vn">ccl</span><span class="eq"> = </span><span class="vo">{ClassLoaders$AppClassLoader@1515}</span></span></div>
<div class="vr" style="top:560px"><span class="a" style="left:42px;top:2px"><svg class="ic c" width="16" height="16" viewBox="0 0 16 16" overflow="visible"><circle cx="8" cy="8.5" r="7" fill="#b58d3d"/><text x="8" y="12.3" text-anchor="middle" font-family="Liberation Sans, sans-serif" font-size="11" fill="#44392a">f</text></svg></span><span class="vt" style="left:61px"><span class="vn">callCount</span><span class="eq"> = </span><span class="vp">0</span></span></div>
<div class="vr" style="top:580px"><span class="a" style="left:42px;top:2px"><svg class="ic c" width="16" height="16" viewBox="0 0 16 16" overflow="visible"><circle cx="8" cy="8.5" r="7" fill="#b58d3d"/><text x="8" y="12.3" text-anchor="middle" font-family="Liberation Sans, sans-serif" font-size="11" fill="#44392a">f</text></svg></span><span class="vt" style="left:61px"><span class="vn">removed</span><span class="eq"> = </span><span class="vp">false</span></span></div>
<div class="vr" style="top:600px"><span class="a" style="left:25px;top:3.5px"><svg class="ar" width="10" height="12" viewBox="0 0 10 12"><path d="M2.6 2L6.6 6L2.6 10" fill="none" stroke="#afb1b3" stroke-width="1.3"/></svg></span><span class="a" style="left:42px;top:2px"><svg class="ic c" width="16" height="16" viewBox="0 0 16 16" overflow="visible"><circle cx="8" cy="8.5" r="7" fill="#b58d3d"/><text x="8" y="12.3" text-anchor="middle" font-family="Liberation Sans, sans-serif" font-size="11" fill="#44392a">f</text></svg></span><span class="vt" style="left:61px"><span class="vn">exportedTransport</span><span class="eq"> = </span><span class="vo">{TCPTransport@1410}</span></span></div>
<div class="vr" style="top:620px"><span class="a" style="left:7px;top:3.5px"><svg class="ar" width="10" height="12" viewBox="0 0 10 12"><path d="M2.6 2L6.6 6L2.6 10" fill="none" stroke="#afb1b3" stroke-width="1.3"/></svg></span><span class="a" style="left:26px;top:4px"><svg class="ic" width="12" height="13" viewBox="0 0 12 13"><path d="M1 1.5H11.1M1 5.5H11.1M1 9.5H11.1" stroke="#bf8f38" stroke-width="3.1"/><path d="M1 1.5H11.1M1 5.5H11.1M1 9.5H11.1" stroke="#c89a42" stroke-width="0.9"/></svg></span><span class="vt" style="left:43px"><span class="vn">impl</span><span class="eq"> = </span><span class="vo">{OperationImpl@1514}</span><span class="ts"> ... toString()</span></span></div></div>
</div>
<div id="topline"></div><div id="topblue"></div><div id="botline"></div>
<div class="rb" style="left:128.5px;top:151.5px;width:323.5px;height:18px"></div>
<div class="rb" style="left:99px;top:305px;width:500.5px;height:42.9px"></div>
<div class="rb" style="left:908px;top:377px;width:278.5px;height:60px"></div>
<div class="rb" style="left:930.5px;top:518px;width:340.5px;height:17px"></div>
<div class="rb" style="left:941px;top:635px;width:136px;height:46px"></div>
<svg id="ann" width="1357" height="917" viewBox="0 0 1357 917"><polygon points="471.2,161.8 470.8,163.2 586.4,204.9 584.5,207.4 596.8,205.3 588.3,196.1 588.3,199.2" fill="#fb2117"/>
<polygon points="623.7,299.7 624.5,300.9 674.4,274.7 675.1,277.8 681.6,267.1 669.1,267.4 671.4,269.5" fill="#fb2117"/>
<polygon points="877.1,373.9 878.1,372.9 762.5,268.3 765.2,266.7 753.0,264.0 757.3,275.8 758.5,272.9" fill="#fb2117"/>
<polygon points="913.7,522.3 914.1,520.9 867.0,504.3 868.9,501.7 856.6,504.3 865.4,513.2 865.3,510.1" fill="#fb2117"/>
<polygon points="918.4,664.7 918.8,663.3 872.4,644.9 874.4,642.4 862.0,644.5 870.4,653.8 870.5,650.6" fill="#fb2117"/></svg>
<span class="rt rc" style="left:543px;top:224px">先通过</span><span class="rt rl" style="left:596px;top:225px">id</span><span class="rt rc" style="left:615.5px;top:224px">匹配到对应的</span><span class="rt rl" style="left:716.5px;top:225px">target</span><span class="rt rc" style="left:475.5px;top:486px">可以看到成功匹配到</span><span class="rt rl" style="left:624px;top:487px">OperationImpl</span><span class="rt rc" style="left:740.5px;top:486px">对应的</span><span class="rt rl" style="left:793.5px;top:487px">target</span><span class="rt rl" style="left:660px;top:617px">filter</span><span class="rt rc" style="left:698.5px;top:616px">是</span><span class="rt rl" style="left:720.5px;top:617px">null</span><span class="rt rl" style="left:753.5px;top:617px">,</span><span class="rt rl" style="left:762.3px;top:617px;letter-spacing:-.4px">skel</span><span class="rt rc" style="left:795.5px;top:616px">是</span><span class="rt rl" style="left:817.5px;top:617px">null</span>
</div>
</body></html>
